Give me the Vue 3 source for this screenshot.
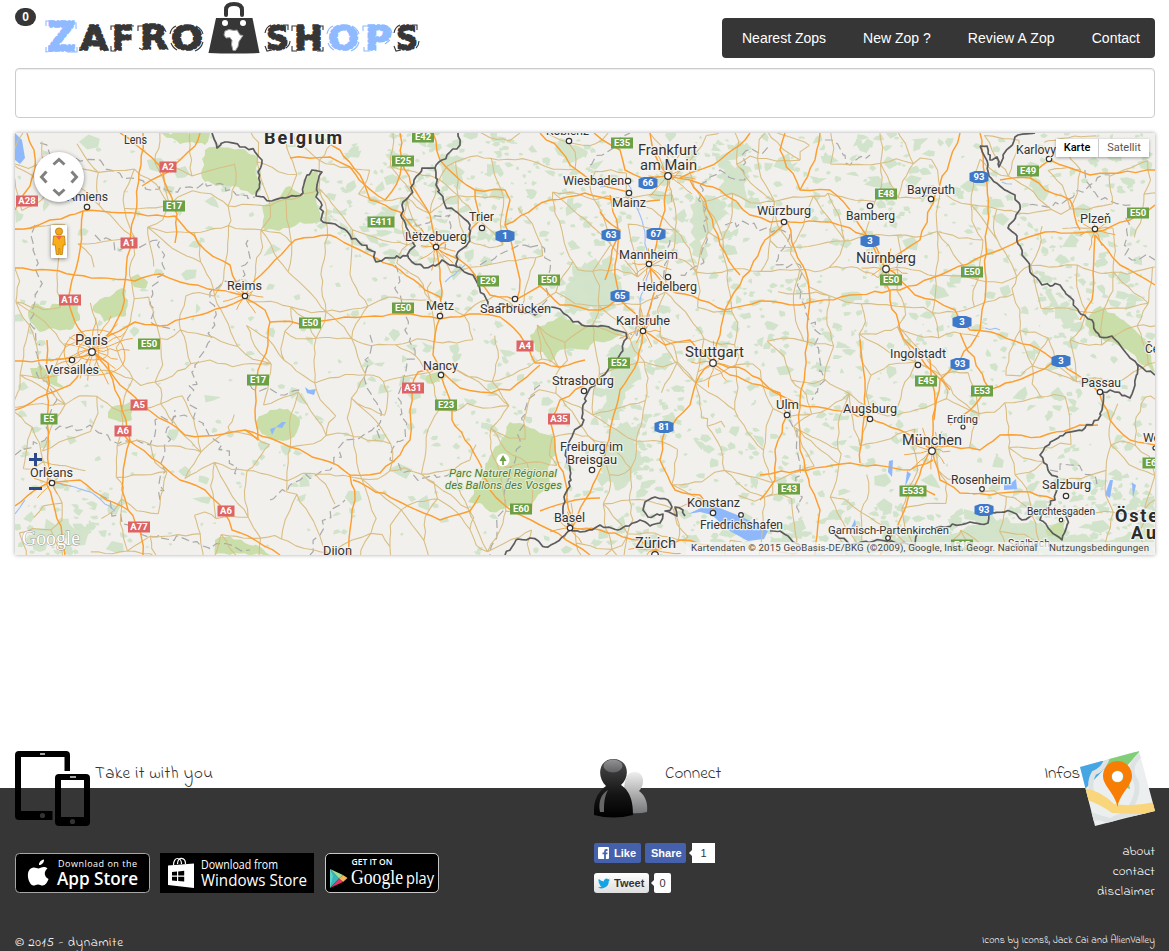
<script setup>
const navItems = ['Nearest Zops', 'New Zop ?', 'Review A Zop', 'Contact']
const infoLinks = ['about', 'contact', 'disclaimer']

// Letter, left edge, width, font size, baseline, colour
const logo = [
  ['Z', 47, 29, 41, 51, '#8fbaff'], ['A', 80, 28, 34, 50, '#363636'], ['F', 112, 22, 33, 50, '#363636'],
  ['R', 140, 28, 33, 49, '#363636'], ['O', 171, 32, 33, 50, '#363636'], ['S', 266, 23, 33, 50, '#363636'],
  ['H', 294, 29, 33, 50, '#363636'], ['O', 328, 31, 33, 50, '#8fbaff'], ['P', 365, 27, 33, 50, '#8fbaff'],
  ['S', 396, 22, 33, 50, '#363636']
]
// Scuffed outline strokes round the letters
const scuffs = [
  ['M46 26v-5h7M60 21l16 2v6M46 47v5l8-1M67 52h10v-5', '#8fbaff'],
  ['M80 51v-4M89 30l4-5 4 2M104 43l4 6-4 2M111 30v-4h7M126 26h8M111 46v5h5M138 31v-5h6M158 25q7 2 8 7M139 48l4 2M161 49l6-3M170 34q1-6 6-8M196 26q6 3 7 8M203 42q-2 7-8 9M171 43q2 5 6 7', '#363636'],
  ['M265 33q1-6 6-8M283 25h5v5M265 46l2 5 5-1M286 48q4-3 4-7M292 31v-5h5M312 26h11v4M292 46v5h5M317 51h6v-4M394 33q1-6 6-8M412 25h5v5M394 46l2 5 5-1M416 48q3-3 3-7', '#363636'],
  ['M327 34q1-6 6-8M352 26q6 3 7 8M359 42q-2 7-8 9M328 43q2 5 6 7M363 31v-5h6M384 25q7 2 8 8M364 47v4h6M390 40l-5 4', '#8fbaff']
]

// Deterministic generator, so the terrain is the same on every load
let seed = 20157
const rnd = () => {
  seed = (seed * 1664525 + 1013904223) % 4294967296
  return seed / 4294967296
}
const jag = (pts, amp, step) => {
  let d = `M${pts[0][0]} ${pts[0][1]}`
  for (let i = 1; i < pts.length; i++) {
    const [x0, y0] = pts[i - 1]
    const [x1, y1] = pts[i]
    const n = Math.max(1, Math.round(Math.hypot(x1 - x0, y1 - y0) / step))
    for (let k = 1; k < n; k++) {
      const t = k / n
      d += `L${(x0 + (x1 - x0) * t + (rnd() - 0.5) * amp).toFixed(1)} ${(y0 + (y1 - y0) * t + (rnd() - 0.5) * amp).toFixed(1)}`
    }
    d += `L${x1} ${y1}`
  }
  return d
}
const parse = (s) => s.split(' ').map((p) => p.split(',').map(Number))
const area = (amp, step) => (s) => {
  const pts = parse(s)
  return jag([...pts, pts[0]], amp, step) + 'Z'
}

// Woods: many small flecks, denser in the hills
const zones = [
  [440, 200, 130, 75, 1], [360, 215, 50, 40, 0.9], [590, 230, 60, 60, 0.6], [715, 185, 60, 50, 0.95],
  [700, 240, 40, 40, 0.95], [640, 400, 42, 95, 1.2], [595, 290, 42, 34, 1.2], [530, 355, 45, 35, 0.4],
  [780, 380, 130, 110, 0.55], [930, 260, 100, 100, 0.55], [1060, 310, 90, 90, 0.75], [1120, 210, 60, 100, 0.55],
  [920, 545, 240, 42, 1.2], [1090, 520, 80, 50, 1.1], [510, 440, 60, 60, 0.5], [420, 330, 60, 90, 0.4],
  [70, 520, 60, 45, 0.7], [800, 160, 180, 40, 0.55], [690, 545, 100, 40, 0.65], [560, 170, 60, 50, 0.7]
]
const density = (x, y) => zones.reduce((m, z) => {
  const r = ((x - z[0]) / z[2]) ** 2 + ((y - z[1]) / z[3]) ** 2
  return r < 1 ? Math.max(m, z[4]) : m
}, x > 600 ? 0.3 : 0.12)
let flecks = ''
for (let i = 0; i < 6200; i++) {
  const x = 15 + rnd() * 1140
  const y = 133 + rnd() * 422
  const s = 1.6 + rnd() * rnd() * 6.5
  const a = rnd() * 6.3
  if (rnd() > density(x, y) * 0.75) continue
  for (let k = 0; k < 5; k++) {
    const r = s * (0.3 + rnd())
    flecks += `${k ? 'L' : 'M'}${(x + Math.cos(a + k * 1.26) * r * 1.35).toFixed(1)} ${(y + Math.sin(a + k * 1.26) * r).toFixed(1)}`
  }
  flecks += 'Z'
}

// Secondary roads: a jittered mesh
const cols = 35
const rows = 14
const nodes = []
for (let j = 0; j < rows; j++) {
  for (let i = 0; i < cols; i++) nodes.push([i * 34 + 8 + rnd() * 26, j * 34 + 120 + rnd() * 26])
}
let minor = ''
const link = (a, b) => {
  const mx = (a[0] + b[0]) / 2 + (rnd() - 0.5) * 11
  const my = (a[1] + b[1]) / 2 + (rnd() - 0.5) * 11
  minor += jag([a, [mx, my], b], 2.4, 8)
}
for (let j = 0; j < rows; j++) {
  for (let i = 0; i < cols; i++) {
    const n = nodes[j * cols + i]
    if (i < cols - 1 && rnd() < 0.68) link(n, nodes[j * cols + i + 1])
    if (j < rows - 1 && rnd() < 0.68) link(n, nodes[(j + 1) * cols + i])
    if (i < cols - 1 && j < rows - 1 && rnd() < 0.2) link(n, nodes[(j + 1) * cols + i + 1])
  }
}
// Short feeder roads round the larger towns
const hubs = [[92, 350, 18, 36], [713, 363, 8, 24], [932, 450, 9, 24], [668, 175, 9, 26], [886, 268, 8, 22], [436, 248, 8, 22], [245, 296, 7, 18], [643, 330, 7, 20], [648, 264, 8, 22], [655, 550, 8, 22], [570, 528, 7, 20], [52, 483, 6, 18], [1095, 231, 7, 20]]
let feeders = ''
for (const [x, y, n, r] of hubs) {
  for (let k = 0; k < n; k++) {
    const a = (k / n) * 6.28 + rnd() * 0.3
    const q = r * (0.7 + rnd() * 0.6)
    feeders += jag([[x, y], [x + Math.cos(a) * q, y + Math.sin(a) * q * 0.85]], 3, 6)
  }
}
feeders += 'M64 352q2-20 28-22t32 20-26 25-34-23M78 350q2-10 15-10t15 10-15 10-15-10'

const majorRoads = [
  '15,229 30,228 50,220 70,215 83,211 100,211 140,214 175,216 205,250 230,265 238,285 245,296',
  '27,133 34,150 35,170 30,186 18,204 15,210', '143,133 141,165 137,200 130,240 126,275 122,310 112,330 98,346',
  '83,211 80,250 72,280 68,300 75,322 90,345', '120,133 145,152 163,172 168,190 177,214 175,243',
  '200,133 195,146 180,160 168,172 142,186', '15,268 50,270 75,275 100,278 135,281 160,274 180,282 215,290 245,296',
  '245,296 255,280 275,260 295,240 330,235 360,250 400,270 425,290 440,297 441,315 435,335 433,355 441,375 450,400 452,420 465,440 478,460 490,490 512,511 540,525 575,545 590,555',
  '98,346 110,335 135,322 160,326 200,315 225,307 245,298 265,310 270,322 310,323 345,317 375,316 400,314 440,319 480,314 500,317 520,335 535,363 560,367 585,360',
  '92,350 108,363 115,390 122,410 130,440 125,460 122,490 128,510 140,530 143,555',
  '92,350 120,385 150,411 168,422 185,435 205,436 245,430 270,438 290,447 330,462 350,475 380,473 400,455 410,440 410,410 412,388 418,372 440,370 460,388 480,392 510,390 540,365',
  '122,432 135,445 160,463 180,480 205,490 220,505 232,530 255,540 280,555', '47,340 48,375 48,410 48,450 47,485 55,510 62,535 65,555',
  '15,410 45,395 70,385 88,360', '15,361 50,360 90,355', '15,506 35,490 50,482 80,480 100,495 128,510',
  '270,322 268,345 258,370 255,410 258,440 245,430', '350,475 355,500 350,530 348,555', '353,480 400,502 440,520 470,511 480,495',
  '400,133 402,160 415,190 430,215 436,245 440,270 441,300', '315,133 340,150 360,175 370,200 400,212 420,235 436,248',
  '290,158 330,157 350,167 365,185 385,200 400,175 402,155', '433,133 440,160 460,180 475,190 480,220 467,237 450,240 437,248',
  '436,248 460,260 475,275 490,295 515,300 540,286 560,305 600,310 620,298', '475,190 505,190 510,200 505,225 513,250 520,280 516,302',
  '505,225 550,200 585,193 600,197 628,203 660,200', '540,133 560,150 570,165 590,180 628,192',
  '594,133 620,150 625,170 648,180 668,176 690,180 720,190 750,215 770,222 790,222 830,222 850,228 870,240 886,268',
  '668,176 665,210 658,235 650,265 655,290 645,325 638,360 620,390 610,430 600,470 585,500 572,528',
  '610,195 618,230 615,265 620,300 640,320', '605,280 612,250 620,230 600,212', '680,178 720,160 745,140 750,133', '650,133 655,155 668,176',
  '690,180 705,200 720,245 740,275', '650,268 670,290 700,300 725,310 740,285 765,240 787,220',
  '643,330 665,345 690,340 713,363 745,370 780,395 800,405 850,412 900,430 932,450 940,480 960,493 990,495 1030,492 1055,500',
  '713,363 700,375 690,405 665,430 660,460 675,490 700,495 715,510', '725,310 720,335 713,363 730,375 760,385 780,393 787,415 775,450 775,480 760,500',
  '787,222 795,250 808,280 810,300 808,335 805,370 800,400 800,450 805,470 820,510 815,555',
  '725,310 760,301 800,305 850,295 900,290 940,275 985,255 1020,240 1045,232 1095,232 1130,220 1155,205',
  '886,268 900,280 915,295 935,300 955,310 970,330 1000,335 1030,345 1060,362 1085,380 1100,395 1110,420 1130,440 1155,445',
  '886,268 890,300 900,330 910,345 930,360 935,400 932,450', '886,262 870,240 850,210 830,190 800,190 780,150 785,133',
  '886,262 920,240 935,195 950,160 960,133', '980,133 985,175 988,210 985,270 985,300 980,330 960,360 940,380 934,420',
  '933,460 910,470 850,463 800,470 760,475', '932,445 980,450 1000,435 1040,437 1080,425 1098,425',
  '960,333 990,390 975,405 950,425', '1000,180 1030,178 1050,160 1090,175 1155,170', '1030,178 1045,190 1070,200 1080,230',
  '1095,235 1092,300 1080,320', '1095,235 1120,265 1155,285', '540,511 575,500 600,498',
  '572,528 600,530 640,540 655,550 680,540 710,545', '572,528 565,480 555,450 550,420 560,400 585,385',
  '800,190 815,160 820,133', '860,340 865,380 865,410 862,440 860,463', '910,345 950,390', '982,391 1030,375 1060,360', '935,495 915,485 930,450', '910,490 900,520 880,555'
].map((s) => jag(parse(s), 3, 9))

const borders = [
  '212,133 217,148 225,142 245,147 255,152 262,160 258,172 260,182 256,196 270,201 285,198 303,193 305,180 312,170 322,172 317,185 316,197 322,205 321,220 335,224 350,235 362,245 375,252 376,262 390,258 408,256 410,250 415,246 409,232 402,218 402,205 410,195 414,180 422,168 435,168 442,160 450,152 460,145 458,133',
  '435,168 436,185 445,205 460,215 470,225 468,243 458,252 457,267', '408,256 412,262 424,268 435,266 442,260 457,267 473,275 480,290 488,302 490,310 503,304 520,310 535,315 551,307 560,309 570,318 582,325 604,326 626,333 627,338 618,358 608,370 590,388 583,405 582,425 573,434 566,450 570,470 571,480 564,497 563,513 570,530 555,543 545,547 530,538 516,540 505,555',
  '570,530 580,532 592,530 600,525 618,530 640,520 650,526 660,523 663,514 648,517 643,510 645,502 655,497 668,500 672,507 665,511 677,516 675,507 683,510 685,516', '770,531 780,531 788,536 800,545', '980,146 987,146 990,160 997,157 999,167 1003,155 1010,147 1018,135 1035,133',
  '980,146 988,165 989,176 1000,186 1015,195 1020,205 1016,215 1008,228 1017,236 1022,255 1028,262 1030,272 1042,285 1060,285 1070,297 1079,312 1092,320 1100,337 1112,336 1120,345 1130,358 1137,364 1155,375',
  '1137,364 1135,385 1130,398 1110,390 1102,392 1102,410 1098,420 1085,428 1060,436 1045,447 1040,455 1048,470 1058,480 1055,500 1043,510 1040,520 1050,530 1062,540 1067,525 1068,515',
  '1040,512 1022,520 1012,512 990,512 988,523 970,522 945,527 920,530 915,545 880,540 850,545 830,530'
].map((s) => jag(parse(s), 3.4, 4))

const districts = [
  '40,143 55,155 70,160 100,160 130,178 150,190 180,188 205,182 255,197', '35,225 33,250 40,280 30,320 40,345', '95,235 120,250 160,240 165,270 150,300 155,325 175,330',
  '248,240 245,275 212,290 213,320 205,350 195,370 190,405 215,440 240,475', '55,430 90,425 110,440 150,445 155,420 190,418', '395,265 400,310 415,350 400,390 405,430 390,460 420,480 460,470',
  '405,220 420,225 450,215 445,250', '480,265 510,250 540,245 550,270 540,310', '590,165 615,145 630,133', '700,185 720,170 745,180 742,155 770,150', '700,185 705,230 700,265 680,275',
  '725,225 750,225 790,235 775,265 800,265 800,300 815,330 825,380 812,400', '790,410 800,470 798,515', '825,140 845,155 850,165 870,155', '1085,170 1100,200 1130,205 1125,255 1155,260',
  '1030,205 1060,205 1090,185 1110,175', '540,385 525,410 520,440 505,500 490,555', '250,385 280,395 300,390', '100,495 130,530 160,535 200,545 250,550', '670,240 660,280 645,330 630,334', '1050,470 1070,465 1095,475 1090,490',
  '15,455 45,440 57,400 40,380 35,350', '270,500 300,480 330,470 345,440 380,430', '160,500 165,450 175,410', '370,335 365,375 380,410 375,440', '310,555 330,510 345,500'
].map((s) => jag(parse(s), 8, 6))

const parks = [
  '205,150 220,147 238,149 258,157 255,172 261,190 252,195 232,186 213,184 202,178', '262,206 272,202 290,186 304,196 303,180 318,170 316,198 322,222 300,222 290,228 265,231 263,220',
  '28,312 32,304 45,308 58,304 78,306 80,320 70,330 50,328 40,332 30,322', '92,310 105,297 122,288 128,300 126,316 112,318 104,322 100,314', '130,278 138,274 148,282 146,288 134,287',
  '259,416 270,410 288,409 300,420 297,432 288,440 275,440 262,434 256,428', '495,447 505,436 510,422 520,423 530,428 552,436 556,455 548,468 550,485 538,495 525,507 512,505 490,512 480,503 468,502 474,490 485,470',
  '530,335 545,325 562,316 580,325 606,327 625,334 612,340 595,341 588,350 572,348 560,350 550,363 543,352 535,350', '30,368 40,364 50,370 65,388 55,386 45,380 33,378', '108,412 118,405 130,402 132,420 120,422 108,418',
  '160,133 210,133 205,145 192,142 180,144 172,138', '215,540 230,536 245,543 262,548 270,555 215,555', '1085,325 1092,312 1100,306 1118,318 1135,330 1150,345 1155,372 1142,365 1130,352 1112,342 1096,337', '1045,530 1055,524 1065,520 1062,540 1048,536', '425,380 430,374 440,372 440,382 432,384'
].map(area(4, 5))
const woods = [
  '572,270 585,262 610,260 614,275 622,290 610,310 598,312 590,305 575,315 565,300', '615,345 628,348 640,340 635,360 638,380 625,392 620,420 608,418 600,425 604,405 610,385', '608,430 620,425 640,425 636,445 645,470 630,475 615,490 606,480 600,470',
  '690,205 705,195 715,195 730,215 715,225 700,240 708,255 703,265 692,255', '1030,182 1040,180 1050,184 1045,200 1036,197', '1045,292 1062,305 1080,320 1070,328 1055,312',
  '440,155 455,165 465,172 460,190 448,186', '720,160 735,168 750,167 745,190 748,203 732,195 720,190', '560,138 575,145 588,152 570,170 558,155',
  '890,538 925,532 960,532 1000,518 1040,522 1070,535 1100,540 1155,522 1155,555 820,555 850,545', '325,216 340,222 355,235 370,248 350,240', '25,540 45,525 60,518 80,530 92,532 85,545 60,540 40,552', '878,262 888,264 895,280 886,290'
].map(area(9, 5))
const lakes = [
  'M15,133L22,140L25,158L20,164L15,160Z', 'M698,497L712,505L735,514L755,523L768,531L764,539L748,541L728,530L712,515L700,512L688,514L703,507Z', 'M305,387L309,390L316,389L314,395L307,393Z', 'M270,429L276,427L272,435ZM276,427L282,422L286,422L282,428Z',
  'M889,461L893,460L892,477L888,472Z', 'M907,471L911,474L905,487Z', 'M1004,482L1010,484L1016,479L1017,489L1004,490Z', 'M1110,480L1113,480L1110,498L1105,495Z', 'M1132,483L1136,485L1133,498Z', 'M855,519L856,526L851,528Z'
]
const rivers = ['50,482 75,487 95,495 115,511', '25,500 15,514', '600,187 628,184 640,215 648,255', '636,335 640,300 650,270', '465,265 445,282', '1002,182 1012,184', '985,328 1000,330'].map((s) => jag(parse(s), 3, 6))

// Label, left edge, baseline, width, font size
const cities = [
  ['Lens', 124, 144, 23, 12], ['Amiens', 67, 201, 41, 12.5], ['Reims', 227, 290, 35, 13], ['Paris', 75, 345, 33, 14.5], ['Versailles', 45, 374, 54, 12.5], ['Orléans', 30, 477, 43, 12.5],
  ['Koblenz', 546, 135, 43, 12.5], ['Trier', 469, 221, 25, 12.5], ['Lëtzebuerg', 405, 241, 62, 13], ['Metz', 426, 310, 28, 13], ['Saarbrücken', 480, 313, 71, 12.5], ['Nancy', 423, 370, 35, 13],
  ['Strasbourg', 552, 385, 62, 13], ['Frankfurt', 638, 155, 59, 14], ['am Main', 640, 170, 57, 14], ['Wiesbaden', 563, 185, 61, 13], ['Mainz', 612, 207, 34, 13], ['Mannheim', 619, 259, 59, 13],
  ['Heidelberg', 637, 291, 60, 13], ['Karlsruhe', 616, 325, 54, 13], ['Würzburg', 757, 215, 54, 13], ['Bamberg', 846, 220, 49, 12.5], ['Bayreuth', 907, 194, 48, 12.5], ['Nürnberg', 856, 263, 60, 14.5],
  ['Karlovy', 1016, 154, 40, 12.5], ['Plzeň', 1080, 223, 31, 13], ['Stuttgart', 685, 357, 59, 14.5], ['Ingolstadt', 890, 358, 56, 12.5], ['Ulm', 776, 409, 23, 13], ['Augsburg', 843, 413, 54, 12.5],
  ['Erding', 947, 423, 31, 11], ['München', 902, 445, 60, 15], ['Passau', 1081, 387, 40, 12.5], ['Rosenheim', 951, 484, 60, 12.5], ['Salzburg', 1042, 489, 49, 13], ['Berchtesgaden', 1027, 515, 68, 10.5],
  ['Freiburg im', 560, 451, 63, 13], ['Breisgau', 567, 464, 50, 13], ['Basel', 554, 522, 31, 13], ['Zürich', 635, 548, 41, 14.5], ['Konstanz', 687, 507, 53, 12.5], ['Friedrichshafen', 700, 529, 83, 12.5],
  ['Garmisch-Partenkirchen', 828, 534, 121, 11.5], ['Dijon', 323, 555, 29, 13], ['Če', 1145, 353, 14, 12], ['We', 1143, 442, 17, 12.5]
]
const countries = [['Belgium', 264, 144, 78], ['Öste', 1115, 522, 43], ['Au', 1131, 539, 25]]
const dots = [[87, 207], [245, 296], [72, 360], [52, 483], [436, 247], [482, 228], [440, 316], [515, 299], [441, 375], [584, 391], [628, 181], [629, 193], [569, 141], [649, 264], [668, 277], [643, 331], [784, 222], [870, 206], [931, 199], [1049, 159], [1095, 229], [918, 365], [787, 415], [870, 419], [963, 427, 2], [1100, 392], [982, 489, 2.3], [1066, 496], [1061, 520, 1.8], [592, 470], [570, 528], [713, 513], [741, 515, 2.3], [888, 538, 2.3], [1155, 448, 2], [92, 352, 3.3], [668, 176, 3.3], [713, 363, 3.3], [886, 269, 3.3], [932, 451, 3.3], [655, 555, 3.3]]
// Label, centre x, centre y, kind
const shields = [
  ['A2', 168, 167, 'a'], ['A28', 27, 201, 'a'], ['A1', 129, 243, 'a'], ['A16', 70, 300, 'a'], ['A5', 139, 405, 'a'], ['A6', 123, 431, 'a'], ['A6', 226, 511, 'a'], ['A77', 139, 527, 'a'], ['A31', 413, 388, 'a'], ['A4', 525, 346, 'a'], ['A35', 559, 419, 'a'],
  ['E17', 174, 206, 'e'], ['E42', 423, 137, 'e'], ['E25', 403, 161, 'e'], ['E411', 381, 222, 'e'], ['E29', 488, 281, 'e'], ['E50', 549, 280, 'e'], ['E50', 403, 308, 'e'], ['E50', 310, 323, 'e'], ['E50', 149, 344, 'e'], ['E17', 258, 380, 'e'], ['E5', 49, 419, 'e'], ['E23', 446, 405, 'e'], ['E60', 521, 509, 'e'], ['E52', 619, 363, 'e'], ['E35', 622, 143, 'e'], ['E43', 789, 489, 'e'], ['E48', 886, 194, 'e'], ['E49', 1028, 171, 'e'], ['E50', 1138, 213, 'e'], ['E50', 972, 272, 'e'], ['E50', 891, 280, 'e'], ['E45', 926, 381, 'e'], ['E53', 982, 391, 'e'], ['E533', 913, 491, 'e'], ['E6', 1151, 463, 'e'], ['E45', 962, 545, 'e'],
  ['1', 505, 236, 'b'], ['66', 648, 183, 'b'], ['63', 611, 235, 'b'], ['67', 656, 234, 'b'], ['65', 620, 296, 'b'], ['81', 664, 427, 'b'], ['3', 870, 241, 'b'], ['93', 979, 177, 'b'], ['3', 962, 322, 'b'], ['93', 960, 364, 'b'], ['3', 1061, 361, 'b'], ['93', 984, 510, 'b']
].map(([t, x, y, k]) => ({ t, x, y, k, w: k === 'b' ? 19 : t.length === 2 ? 17 : t.length === 3 ? 22 : 27 }))
const fill = { a: '#dc6464', e: '#6ca045', b: '#3e78c9' }
const shieldPath = ({ x, y, w, k }) => k === 'b'
  ? `M${x - 9.5} ${y - 4}L${x - 4} ${y - 6}H${x + 4}L${x + 9.5} ${y - 4}V${y + 4}L${x + 4} ${y + 6}H${x - 4}L${x - 9.5} ${y + 4}Z`
  : `M${x - w / 2} ${y - 5.5}h${w}v11h${-w}z`
</script>

<template>
  <div class="page">
    <header class="header">
      <span class="count">0</span>
      <svg class="logo" width="390" height="60" viewBox="40 0 390 60" aria-label="Zafro Shops">
        <text v-for="(l, i) in logo" :key="i" :x="l[1]" :y="l[4]" :textLength="l[2]" lengthAdjust="spacingAndGlyphs"
          :font-size="l[3]" :fill="l[5]" :stroke="l[5]" class="logo-letter">{{ l[0] }}</text>
        <path v-for="(s, i) in scuffs" :key="'s' + i" :d="s[0]" :stroke="s[1]" fill="none" stroke-width="1.100" />
        <path d="M226 15V10q0-6 8-6t8 6v5" fill="none" stroke="#363636" stroke-width="4" stroke-linecap="round" />
        <path d="M216 18h36.500l7 35q-25.500 1-51 0z" fill="#363636" />
        <circle cx="225" cy="23" r="3" fill="#fff" /><circle cx="243" cy="23" r="3" fill="#fff" />
        <path d="M225 31l4-1.500 5 1 3-.5 3 5 3 .5-4 6-1 5-2.500 4h-2.500l-1.500-6 .5-4-2-3-4 .5-2-3z" fill="#fff" stroke="#9c9c9c" stroke-width="1" />
      </svg>
      <nav class="nav"><a v-for="n in navItems" :key="n">{{ n }}</a></nav>
    </header>

    <input class="search" type="text" aria-label="Search" />

    <section class="map">
      <svg width="1140" height="422" viewBox="15 133 1140 422">
        <rect x="15" y="133" width="1140" height="422" fill="#f2f0ec" />
        <path v-for="(p, i) in woods" :key="'w' + i" :d="p" fill="#d3e4cb" />
        <path :d="flecks" fill="#d1e4cb" />
        <path v-for="(p, i) in parks" :key="'p' + i" :d="p" fill="#c9dea9" />
        <path v-for="(p, i) in lakes" :key="'l' + i" :d="p" fill="#8fb8fb" />
        <g fill="none" stroke-linejoin="round">
          <path v-for="(p, i) in rivers" :key="'r' + i" :d="p" stroke="#9dbff5" stroke-width="1.100" />
          <path v-for="(p, i) in districts" :key="'d' + i" :d="p" stroke="#a9a9a9" stroke-width="1.200" stroke-dasharray="8 4" />
          <path :d="minor" stroke="#d9be84" stroke-width="1.100" />
          <path :d="feeders" stroke="#f0a94a" stroke-width="1" />
          <path v-for="(p, i) in majorRoads" :key="'m' + i" :d="p" stroke="#fc9f30" stroke-width="1.450" />
          <path v-for="(p, i) in borders" :key="'b' + i" :d="p" stroke="#5c5c5c" stroke-width="1.700" />
        </g>
        <circle v-for="(d, i) in dots" :key="'c' + i" :cx="d[0]" :cy="d[1]" :r="d[2] || 2.700" fill="#fff" stroke="#333" stroke-width="1.200" />
        <g v-for="(s, i) in shields" :key="'s' + i">
          <path :d="shieldPath(s)" :fill="fill[s.k]" />
          <text :x="s.x" :y="s.y + 3.200" class="shield">{{ s.t }}</text>
        </g>
        <text v-for="c in cities" :key="c[0]" :x="c[1]" :y="c[2]" :textLength="c[3]" lengthAdjust="spacingAndGlyphs" :font-size="c[4]" class="city">{{ c[0] }}</text>
        <text v-for="c in countries" :key="c[0]" :x="c[1]" :y="c[2]" :textLength="c[3]" class="country">{{ c[0] }}</text>
        <circle cx="503" cy="460" r="6.500" fill="#fff" />
        <path d="M503 455l-3.500 6h2.700v4h1.600v-4h2.700z" fill="#6ca045" />
        <text x="449" y="477" textLength="108" class="park">Parc Naturel Régional</text>
        <text x="445" y="489" textLength="117" class="park">des Ballons des Vosges</text>
        <text x="1008" y="547" textLength="42" font-size="10.500" class="city">Saalbach</text>
        <rect x="686" y="542" width="469" height="13" fill="#f5f5f5" fill-opacity=".74" />
        <text x="691" y="551" textLength="346" class="credit">Kartendaten © 2015 GeoBasis-DE/BKG (©2009), Google, Inst. Geogr. Nacional</text>
        <text x="1049" y="551" textLength="100" class="credit">Nutzungsbedingungen</text>
        <text x="22" y="545" textLength="58" lengthAdjust="spacingAndGlyphs" class="google">Google</text>
        <g class="controls">
          <circle cx="59" cy="177" r="25" fill="#fff" />
          <path d="M53.500 164.500l5.500-5 5.500 5M53.500 189.500l5.500 5 5.500-5M46.500 171.500l-5 5.500 5 5.500M71.500 171.500l5 5.500-5 5.500" fill="none" stroke="#808080" stroke-width="3" />
          <rect x="51" y="225" width="16" height="33" rx="1" fill="#fff" />
        </g>
        <circle cx="59" cy="231.500" r="3.600" fill="#f3a819" stroke="#b87508" stroke-width=".8" />
        <path d="M53.500 236h11l.8 9h-2l-1 9.500h-2.500v-6h-1v6h-2.500l-1-9.500h-2.500z" fill="#f7ae19" stroke="#bd7808" stroke-width=".8" />
        <path d="M56 236h6l-3 4z" fill="#ed625d" />
        <path d="M29 459.500h13M35.500 453v13M29 488.500h13" stroke="#2b4a8c" stroke-width="3" fill="none" />
      </svg>
      <div class="map-type"><span class="active">Karte</span><span>Satellit</span></div>
    </section>

    <footer class="footer">
      <div class="col col-app">
        <div class="heading">
          <svg width="75" height="75" viewBox="0 0 75 75">
            <path fill-rule="evenodd" d="M4 0h47q4 0 4 4v16h-5.500V6H6v54h31.500v9H4q-4 0-4-4V4q0-4 4-4z" />
            <path fill-rule="evenodd" d="M44 23h27q4 0 4 4v44q0 4-4 4H44q-4 0-4-4V27q0-4 4-4zM46 29v37h23V29z" />
            <path d="M25 3h5M55 26h6" stroke="#ddd" stroke-width="1.500" /><circle cx="27.500" cy="64.500" r="2.600" fill="#333" /><circle cx="57.500" cy="70.500" r="2.600" fill="#333" />
          </svg>
          <h3 class="take">Take it with you</h3>
        </div>
        <div class="stores">
          <svg width="135" height="40" viewBox="0 0 135 40">
            <rect x=".5" y=".5" width="134" height="39" rx="4" stroke="#a6a6a6" />
            <path d="M29 6.500c.3 3-2.200 5.700-5 5.500-.3-2.700 2.300-5.200 5-5.500zM32.500 15.500c-4.200 3-3.200 8.500 1 10.500-1 3-3.300 6.500-5.800 6.500-2 0-2.700-1.100-4.700-1.100s-2.800 1.100-4.600 1.100c-4.200 0-8.500-13-2.600-17 3.300-2.200 5.700-.1 7.600-.1 1.700 0 5.500-3.100 9.100.1z" fill="#fff" />
            <text x="43" y="13.500" textLength="79" class="store small">Download on the</text>
            <text x="42" y="32" textLength="81" lengthAdjust="spacingAndGlyphs" font-size="18.500" font-weight="600" class="store">App Store</text>
          </svg>
          <svg width="154" height="40" viewBox="0 0 154 40">
            <path d="M0 0h154v40H0z" /><path d="M8 12.500l26-2V35L8 32z" fill="#fff" />
            <path d="M13.500 12c0-9 8-8 8-1M17.500 11c0-8 8-7 8 0" fill="none" stroke="#fff" stroke-width="1.200" />
            <path d="M12 19l5-.5v4H12zM18.200 18.400l6-.6v4.700h-6zM12 23.700h5v4.200l-5-.4zM18.200 23.700h6v4.800l-6-.5z" />
            <text x="41" y="16" textLength="77" lengthAdjust="spacingAndGlyphs" font-size="12" class="store">Download from</text>
            <text x="41" y="32.500" textLength="106" lengthAdjust="spacingAndGlyphs" font-size="17" class="store">Windows Store</text>
          </svg>
          <svg width="114" height="40" viewBox="0 0 114 40">
            <rect x=".5" y=".5" width="113" height="39" rx="4.500" stroke="#c8c8c8" />
            <path d="M5 16v19l9-9.500z" fill="#38b6bd" /><path d="M5 16l13 6-4 3.500z" fill="#a4dc95" /><path d="M18 22l4.500 3-4.500 4-4-3.500z" fill="#f6b75a" /><path d="M5 35l13-6-4-3.500z" fill="#dd3768" /><path d="M5 16v19l3-12z" fill="#5bd6c8" />
            <text x="26.500" y="12" textLength="41" lengthAdjust="spacingAndGlyphs" font-size="8" font-weight="600" class="store">GET IT ON</text>
            <text x="26" y="31" textLength="52" lengthAdjust="spacingAndGlyphs" class="serif">Google</text>
            <text x="81" y="31" textLength="28" lengthAdjust="spacingAndGlyphs" font-size="17" class="store">play</text>
          </svg>
        </div>
      </div>

      <div class="col col-connect">
        <div class="heading">
          <svg class="people" width="60" height="61" viewBox="0 0 60 61">
            <defs>
              <linearGradient id="dark" x1="0" y1="0" x2="0" y2="1"><stop offset="0" stop-color="#4b4c4e" /><stop offset=".6" stop-color="#151515" /><stop offset="1" stop-color="#000" /></linearGradient>
              <linearGradient id="light" x1="0" y1="0" x2="0" y2="1"><stop offset="0" stop-color="#eee" /><stop offset="1" stop-color="#77787a" /></linearGradient>
              <linearGradient id="shine" x1="0" y1="0" x2="0" y2="1"><stop offset="0" stop-color="#929292" /><stop offset="1" stop-color="#606164" /></linearGradient>
            </defs>
            <path d="M40 14c10-1 12 12 5 19 7 5 9 13 8 21q-7 2-18 1L30 30c1-7 2-16 10-16z" fill="url(#light)" />
            <path d="M19.500 1C34 1 37 18 27 27c11 7 12 21 12 30q-20 5-39 0c-1-12 3-23 12-29C2 18 5 1 19.500 1z" fill="url(#dark)" />
            <ellipse cx="19" cy="8" rx="9.500" ry="6.500" fill="url(#shine)" /><path d="M6 54C4 44 7 36 14 32c-4 7-4 15-4 22z" fill="#666" />
          </svg>
          <h3 class="connect">Connect</h3>
        </div>
        <div class="social">
          <span class="fb"><svg width="11" height="12" viewBox="0 0 11 12"><rect width="11" height="12" rx="1" fill="#fff" /><path d="M9.500 3H8.300Q7 3 7 4.400V12M4.500 6.300h5" fill="none" stroke="#4765ad" stroke-width="1.800" /></svg>Like</span>
          <span class="fb share">Share</span><span class="bubble fb-count">1</span>
        </div>
        <div class="social">
          <span class="tweet"><svg width="13" height="11" viewBox="0 0 24 20"><path d="M24 2.400a9 9 0 0 1-2.800.8A5 5 0 0 0 23.300.5a9 9 0 0 1-3.100 1.200 5 5 0 0 0-8.400 4.500A14 14 0 0 1 1.700 1a5 5 0 0 0 1.500 6.600A5 5 0 0 1 1 7a5 5 0 0 0 4 4.800 5 5 0 0 1-2.200.1 5 5 0 0 0 4.600 3.400A10 10 0 0 1 0 17.400a14 14 0 0 0 21.500-12.500A9 9 0 0 0 24 2.400z" fill="#14a3e4" /></svg>Tweet</span><span class="bubble">0</span>
        </div>
      </div>

      <div class="col col-info">
        <div class="heading">
          <h3 class="infos">Infos</h3>
          <svg width="75" height="76" viewBox="0 0 75 76">
            <defs><clipPath id="sheet"><path d="M0 16Q29 8 59 0l16 60Q45 67 15 75z" /></clipPath></defs>
            <g clip-path="url(#sheet)">
              <path d="M0 0h75v76H0z" fill="#eceff0" /><path d="M0 10h31Q23 20 6 37H0z" fill="#45a6e3" /><path d="M30 4L60 0 46 16 50 38Q35 34 25 22z" fill="#80cf78" />
              <path d="M28 4Q25 18 14 22Q8 32 13 46M60 4Q46 17 56 30Q60 44 48 60M10 68Q28 64 36 76M0 60L30 70Q50 57 75 67" fill="none" stroke="#dfe2e3" stroke-width="5" />
              <path d="M3 37Q20 39 34 53Q53 56 75 51V63Q49 63 32 62Q20 53 7 49z" fill="#f9d67c" />
            </g>
            <path fill-rule="evenodd" d="M37.500 10C29 10 23 17 23 25c0 10 12 17 14.500 31C40 42 52 35 52 25c0-8-6-15-14.500-15zm0 9.500a6 6 0 1 1 0 12 6 6 0 0 1 0-12z" fill="#f87d05" /><circle cx="37.500" cy="25.500" r="5.500" fill="#fff" />
          </svg>
        </div>
        <ul class="links"><li v-for="l in infoLinks" :key="l" :class="l">{{ l }}</li></ul>
      </div>

      <p class="copyright">© 2015 - dynamite</p>
      <p class="icons-by">Icons by Icons8, Jack Cai and AlienValley</p>
    </footer>
  </div>
</template>

<style>
body { margin: 0; background: #fff; }
</style>

<style scoped>
* { box-sizing: border-box; }
.page { width: 100%; height: 951px; overflow: hidden; font: 14px/20px "Liberation Sans", Arial, sans-serif; }
.header { height: 68px; padding: 0 14px 0 15px; display: flex; align-items: flex-start; }
.count { width: 21px; height: 18px; margin-top: 8px; border-radius: 9px; background: #363636; color: #fff; font: 700 12px/18px "Liberation Sans", Arial, sans-serif; text-align: center; }
.logo { display: block; margin-left: 4px; }
.logo-letter { font-family: "DejaVu Sans", sans-serif; font-weight: 700; stroke-width: 1.6px; stroke-dasharray: 6 1.5 3 1; }
.nav { margin: 18px 0 0 auto; width: 433px; height: 40px; padding: 0 15px 0 20px; display: flex; justify-content: space-between; align-items: center; border-radius: 4px; background: #363636; color: #fff; font-size: 14px; }
.nav a:nth-child(3) { letter-spacing: .12px; }
.search { display: block; width: 1140px; height: 50px; margin: 0 15px; border: 1px solid #ccc; border-radius: 4px; box-shadow: inset 0 1px 1px rgba(0, 0, 0, .075); background: #fff; outline: 0; }
.map { position: relative; width: 1140px; height: 422px; margin: 15px 15px 0; box-shadow: 0 0 4px rgba(0, 0, 0, .35); }
.map > svg { display: block; }
.map text { font-family: Roboto, sans-serif; }
.city { fill: #333; stroke: #f7f5f2; stroke-width: 2.4px; stroke-opacity: .85; paint-order: stroke; }
.country { font-size: 18px; font-weight: 700; fill: #2c2c2c; stroke: #f7f5f2; stroke-width: 2.5px; paint-order: stroke; }
.park { font-size: 11.5px; font-style: italic; fill: #4c7c35; stroke: #e4ecd5; stroke-width: 2px; paint-order: stroke; }
.shield { fill: #fff; font-size: 9.5px; font-weight: 700; text-anchor: middle; }
.credit { fill: #444; font-size: 9.7px; }
.map .google { font-family: "Liberation Serif", serif; font-size: 22px; fill: #fff; stroke: #999; stroke-width: 1px; paint-order: stroke; }
.controls { filter: drop-shadow(0 1px 2px rgba(0, 0, 0, .45)); }
.map-type { position: absolute; top: 6px; right: 6px; height: 18px; display: flex; background: #fff; box-shadow: 0 1px 3px rgba(0, 0, 0, .35); font: 11px/18px Roboto, sans-serif; color: #565656; }
.map-type span { width: 51px; text-align: center; border-left: 1px solid #ccc; }
.map-type .active { width: 42px; border: 0; color: #000; font-weight: 500; }

.footer { height: 201px; margin-top: 195px; padding: 1px 14px 0 15px; display: grid; grid-template-columns: 579px 1fr 160px; grid-template-rows: 177px 23px; background: linear-gradient(#fff 38px, #363636 38px); color: #fff; font-family: "Indie Flower", Lato, sans-serif; font-weight: 400; }
.footer svg { display: block; flex: none; }
.heading { height: 75px; display: flex; align-items: flex-start; color: #333; }
h3 { margin: 12px 0 0; font-size: 17px; line-height: 22px; font-weight: 400; white-space: nowrap; }
.take { margin-left: 5px; letter-spacing: .4px; }
.people { margin-top: 7px; }
.connect { margin-left: 11px; letter-spacing: .05px; }
.infos { letter-spacing: -.2px; }
.col-info .heading { justify-content: flex-end; }
.stores { margin-top: 27px; display: flex; }
.stores svg + svg { margin-left: 10px; }
.stores svg:last-child { margin-left: 11px; }
.store { fill: #fff; font-family: "Open Sans", "Noto Sans", sans-serif; }
.small { font-size: 9px; }
.serif { fill: #fff; font-family: "Liberation Serif", serif; font-size: 20px; }
.col-connect .heading + .social { margin-top: 17px; }
.social { height: 20px; margin-bottom: 10px; display: flex; font: 700 11px/20px "Liberation Sans", Arial, sans-serif; }
.fb { width: 47px; height: 20px; padding-left: 4px; display: flex; align-items: center; gap: 5px; border-radius: 2px; background: #4561ab; color: #fff; }
.fb svg { width: 11px; }
.share { width: 41px; margin-left: 4px; padding-left: 6px; }
.tweet { width: 55px; height: 20px; padding-left: 4px; display: flex; align-items: center; gap: 4px; border-radius: 3px; background: linear-gradient(#fff, #dedede); color: #333; }
.tweet svg { width: 12px; }
.bubble { position: relative; width: 17px; margin-left: 5px; border-radius: 2px; background: #fff; color: #333; text-align: center; font-weight: 400; }
.bubble::before { content: ""; position: absolute; left: -3px; top: 7px; border: 3px solid transparent; border-left: 0; border-right-color: #fff; }
.fb-count { width: 23px; margin-left: 6px; border-radius: 0; }
.links { list-style: none; margin: 16px 0 0; padding: 0; text-align: right; font-size: 13px; line-height: 20px; }
.links .contact { letter-spacing: .25px; }
.links .disclaimer { letter-spacing: .45px; }
p { margin: 0; line-height: 22px; white-space: nowrap; }
.copyright { padding-top: 4px; font-size: 13px; letter-spacing: .65px; }
.icons-by { grid-column: 2 / 4; padding-top: 2px; justify-self: end; font-size: 10px; letter-spacing: .18px; }
</style>
